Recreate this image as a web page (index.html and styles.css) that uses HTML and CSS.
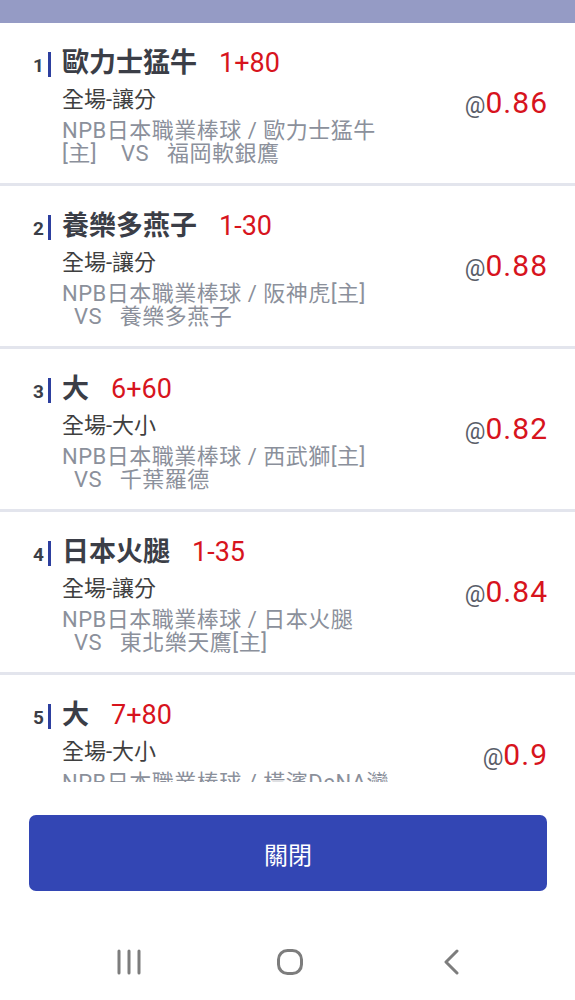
FILE: index.html
```html
<!DOCTYPE html>
<html lang="zh-Hant">
<head>
  <meta charset="UTF-8" />
  <meta name="viewport" content="width=device-width, initial-scale=1.0" />
  <title>注單明細</title>
  <link rel="stylesheet" href="styles.css">
</head>
<body>
  <div class="band"></div>

  <div class="list">
    <div class="bet">
      <div class="main">
        <div class="head">
          <span class="idx">1</span><span class="bar"></span>
          <span class="pick">歐力士猛牛</span><span class="line">1+80</span>
        </div>
        <div class="market">全場-讓分</div>
        <div class="league">NPB日本職業棒球 / 歐力士猛牛<br>[主]    VS   福岡軟銀鷹</div>
      </div>
      <div class="odds"><span class="at">@</span><span class="price">0.86</span></div>
    </div>

    <div class="bet">
      <div class="main">
        <div class="head">
          <span class="idx">2</span><span class="bar"></span>
          <span class="pick">養樂多燕子</span><span class="line">1-30</span>
        </div>
        <div class="market">全場-讓分</div>
        <div class="league">NPB日本職業棒球 / 阪神虎[主]<br>  VS   養樂多燕子</div>
      </div>
      <div class="odds"><span class="at">@</span><span class="price">0.88</span></div>
    </div>

    <div class="bet">
      <div class="main">
        <div class="head">
          <span class="idx">3</span><span class="bar"></span>
          <span class="pick">大</span><span class="line">6+60</span>
        </div>
        <div class="market">全場-大小</div>
        <div class="league">NPB日本職業棒球 / 西武獅[主]<br>  VS   千葉羅德</div>
      </div>
      <div class="odds"><span class="at">@</span><span class="price">0.82</span></div>
    </div>

    <div class="bet">
      <div class="main">
        <div class="head">
          <span class="idx">4</span><span class="bar"></span>
          <span class="pick">日本火腿</span><span class="line">1-35</span>
        </div>
        <div class="market">全場-讓分</div>
        <div class="league">NPB日本職業棒球 / 日本火腿<br>  VS   東北樂天鷹[主]</div>
      </div>
      <div class="odds"><span class="at">@</span><span class="price">0.84</span></div>
    </div>

    <div class="bet">
      <div class="main">
        <div class="head">
          <span class="idx">5</span><span class="bar"></span>
          <span class="pick">大</span><span class="line">7+80</span>
        </div>
        <div class="market">全場-大小</div>
        <div class="league">NPB日本職業棒球 / 橫濱DeNA灣</div>
      </div>
      <div class="odds"><span class="at">@</span><span class="price">0.9</span></div>
    </div>
  </div>

  <div class="actions">
    <button class="close-btn">關閉</button>
  </div>

  <div class="nav">
    <svg class="nav-icon" viewBox="0 0 26 26">
      <path d="M3 2v22M13 2v22M23 2v22"/>
    </svg>
    <svg class="nav-icon" viewBox="0 0 26 26">
      <rect x="1.5" y="1.5" width="23" height="23" rx="9"/>
    </svg>
    <svg class="nav-icon" viewBox="0 0 26 26">
      <path d="M19 2 8 13l11 11"/>
    </svg>
  </div>
</body>
</html>
```

FILE: styles.css
```css
:root {
  --band: #959bc5;
  --divider: #e3e5ed;
  --ink: #3b3e47;
  --accent: #2d3f9f;
  --red: #d7141d;
  --muted: #8b909b;
  --button: #3346b4;
  --nav-icon: #7d7d7d;
}

body {
  margin: 0;
  width: 575px;
  height: 1000px;
  display: flex;
  flex-direction: column;
  background: #fff;
  font-family: Roboto, "Noto Sans CJK TC", sans-serif;
  color: var(--ink);
  overflow: hidden;
}

.band {
  height: 23px;
  background: var(--band);
  flex-shrink: 0;
}

.list {
  height: 759px;
  overflow: hidden;
  flex-shrink: 0;
}

.bet {
  display: flex;
  height: 163px;
  box-sizing: border-box;
  border-bottom: 3px solid var(--divider);
}

.main {
  flex: 1;
  min-width: 0;
  padding-top: 24px;
}

.head {
  display: flex;
  align-items: baseline;
  padding-left: 33px;
  line-height: 32px;
}

.idx {
  width: 15px;
  font-size: 19px;
  font-weight: 700;
}

.bar {
  align-self: center;
  width: 3px;
  height: 25px;
  background: var(--accent);
  margin-right: 11px;
}

.pick {
  font-size: 27px;
  font-weight: 700;
}

.line {
  margin-left: 22px;
  font-size: 27px;
  color: var(--red);
}

.market {
  margin-top: 5px;
  padding-left: 62px;
  font-size: 22px;
  line-height: 26px;
  color: #3f3f3f;
}

.league {
  margin-top: 6px;
  padding-left: 62px;
  font-size: 22px;
  line-height: 23px;
  letter-spacing: 0.5px;
  color: var(--muted);
  white-space: pre;
}

.odds {
  align-self: center;
  padding-right: 27px;
  line-height: 1;
  white-space: nowrap;
}

.at {
  font-size: 23px;
  color: #5a5e69;
}

.price {
  font-size: 30px;
  letter-spacing: 1px;
  color: var(--red);
}

.actions {
  padding: 33px 28px 0 29px;
}

.close-btn {
  display: block;
  width: 100%;
  height: 76px;
  border: none;
  border-radius: 7px;
  background: var(--button);
  color: #fff;
  font-family: inherit;
  font-size: 24px;
  cursor: pointer;
}

.nav {
  display: grid;
  grid-template-columns: repeat(3, 161px);
  justify-items: center;
  padding: 58px 0 0 48px;
}

.nav-icon {
  width: 26px;
  height: 26px;
  fill: none;
  stroke: var(--nav-icon);
  stroke-width: 3;
  stroke-linecap: round;
  stroke-linejoin: round;
}
```
